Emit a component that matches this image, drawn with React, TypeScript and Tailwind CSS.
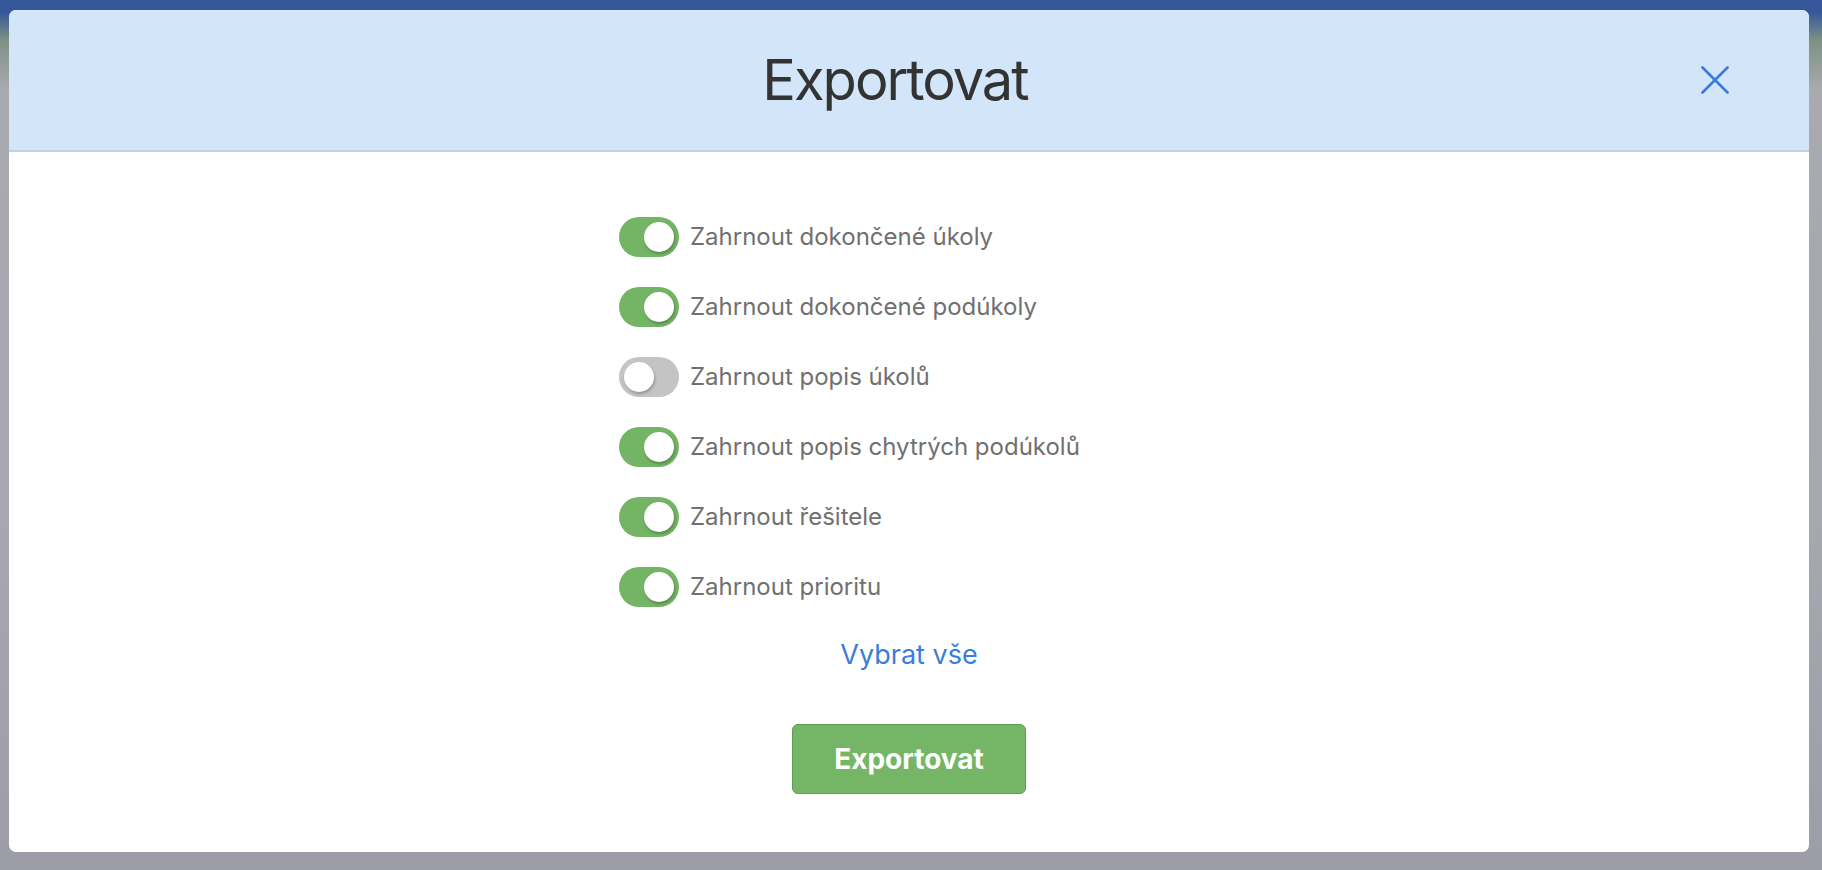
import { useState } from "react";

const OPTIONS = [
  { label: "Zahrnout dokončené úkoly", on: true },
  { label: "Zahrnout dokončené podúkoly", on: true },
  { label: "Zahrnout popis úkolů", on: false },
  { label: "Zahrnout popis chytrých podúkolů", on: true },
  { label: "Zahrnout řešitele", on: true },
  { label: "Zahrnout prioritu", on: true },
];

function Toggle({ on, onClick }: { on: boolean; onClick: () => void }) {
  return (
    <button
      type="button"
      onClick={onClick}
      className={
        on
          ? "relative h-[40px] w-[60px] shrink-0 rounded-full bg-[#73b565]"
          : "relative h-[40px] w-[60px] shrink-0 rounded-full bg-[#c4c4c4]"
      }
    >
      <span
        className={
          on
            ? "absolute right-[5px] top-[5px] h-[30px] w-[30px] rounded-full bg-white shadow-[1px_2px_3px_rgba(0,0,0,0.25)]"
            : "absolute left-[5px] top-[5px] h-[30px] w-[30px] rounded-full bg-white shadow-[1px_2px_3px_rgba(0,0,0,0.25)]"
        }
      />
    </button>
  );
}

export default function App() {
  const [opts, setOpts] = useState(OPTIONS.map((o) => o.on));

  return (
    <div
      className="h-[870px] w-full overflow-hidden bg-[linear-gradient(to_bottom,#35579a_0px,#35579a_12px,#7c9183_40px,#a9aab0_90px,#a6a7af_60%,#9c9da7_100%)] pl-[9px] pt-[10px]"
      style={{ fontFamily: "Inter, 'Noto Sans', sans-serif" }}
    >
      <div className="flex h-[842px] w-[1800px] flex-col overflow-hidden rounded-[7px] bg-white">
        <div className="relative flex h-[142px] shrink-0 items-center justify-center border-b-2 border-[#bfd2e6] bg-[#d3e5f9] pr-[28px]">
          <h1 className="text-[56px] leading-none tracking-[-2px] text-[#333333]">Exportovat</h1>
          <button type="button" className="absolute right-[80px] top-[56px] text-[#3a7bd5]" aria-label="Zavřít">
            <svg width="28" height="28" viewBox="0 0 28 28" fill="none" stroke="currentColor" strokeWidth="2.6" strokeLinecap="round">
              <line x1="1.5" y1="1.5" x2="26.5" y2="26.5" />
              <line x1="26.5" y1="1.5" x2="1.5" y2="26.5" />
            </svg>
          </button>
        </div>

        <div className="flex flex-col items-center pt-[65px]">
          <div className="flex w-[580px] flex-col gap-[30px]">
            {OPTIONS.map((o, i) => (
              <div key={o.label} className="flex items-center gap-[11px]">
                <Toggle
                  on={opts[i]}
                  onClick={() => setOpts(opts.map((v, j) => (j === i ? !v : v)))}
                />
                <span className="text-[24px] leading-none text-[#707070]">{o.label}</span>
              </div>
            ))}
          </div>

          <button type="button" className="mt-[34px] text-[27px] leading-none text-[#3b7dd8]">
            Vybrat vše
          </button>

          <button
            type="button"
            className="mt-[56px] h-[70px] w-[234px] rounded-[6px] border border-[#5c9b50] bg-[#74b666] text-[28px] font-bold text-white"
          >
            Exportovat
          </button>
        </div>
      </div>
    </div>
  );
}
